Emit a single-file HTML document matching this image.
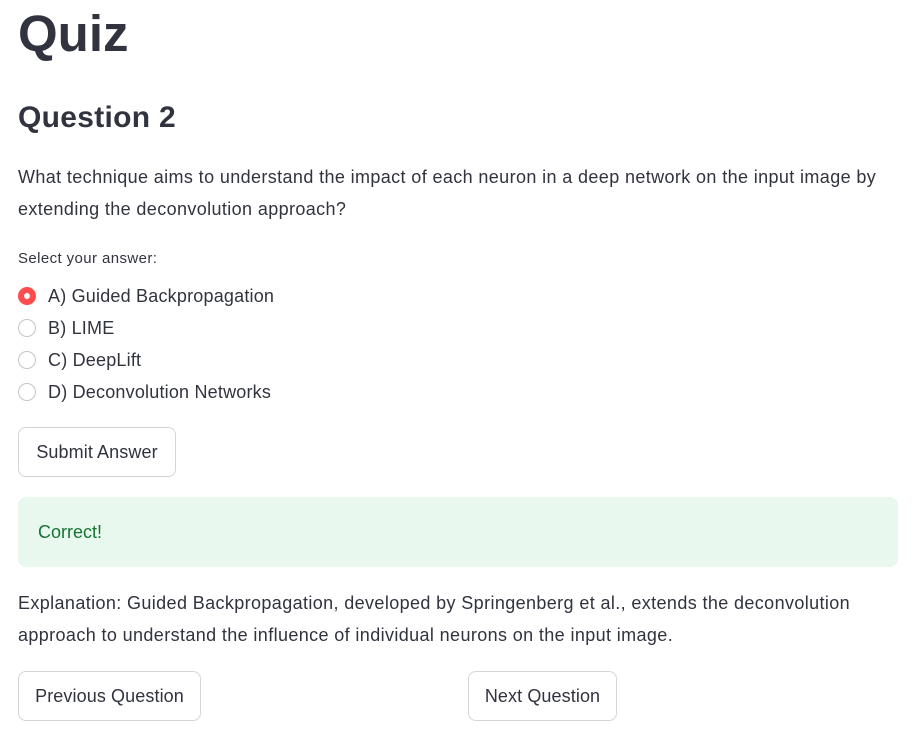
<!DOCTYPE html>
<html><head><meta charset="utf-8">
<style>
body{margin:0;background:#fff;width:918px;height:753px;overflow:hidden;font-family:"Liberation Sans",sans-serif;color:#31333f;position:relative}
.a{position:absolute;white-space:nowrap}
h1{position:absolute;left:18px;top:4px;margin:0;font-size:51px;font-weight:700;letter-spacing:0}
h2{position:absolute;left:18px;top:101px;margin:0;font-size:30px;font-weight:700;letter-spacing:0.3px}
.p{font-size:18px;line-height:32px;left:18px;letter-spacing:0.38px}
.r{left:18px;font-size:18px;display:flex;align-items:center;height:22px;letter-spacing:0.2px}
.r i{display:inline-block;width:18px;height:18px;border:1px solid #c5c6cb;border-radius:50%;margin-right:12px;box-sizing:border-box}
.r i.on{background:#ff4b4b;border:none;position:relative}
.r i.on:after{content:"";position:absolute;left:6px;top:6px;width:6px;height:6px;border-radius:50%;background:#fff}
.b{position:absolute;border:1px solid #d4d5d9;border-radius:8px;box-sizing:border-box;height:50px;display:flex;align-items:center;justify-content:center;font-size:18px;background:#fff;letter-spacing:0.1px}
</style></head><body>
<h1>Quiz</h1>
<h2>Question 2</h2>
<div class="a p" style="top:161px">What technique aims to understand the impact of each neuron in a deep network on the input image by</div>
<div class="a p" style="top:193px">extending the deconvolution approach?</div>
<div class="a" style="left:18px;top:250px;font-size:15px;letter-spacing:0.4px">Select your answer:</div>
<div class="a r" style="top:285px"><i class="on"></i>A) Guided Backpropagation</div>
<div class="a r" style="top:317px"><i></i>B) LIME</div>
<div class="a r" style="top:349px"><i></i>C) DeepLift</div>
<div class="a r" style="top:381px"><i></i>D) Deconvolution Networks</div>
<div class="b" style="left:18px;top:427px;width:158px">Submit Answer</div>
<div class="a" style="left:18px;top:497px;width:880px;height:70px;background:#e8f8ee;border-radius:8px"></div>
<div class="a" style="left:38px;top:522px;font-size:18px;color:#177233">Correct!</div>
<div class="a p" style="top:587px">Explanation: Guided Backpropagation, developed by Springenberg et al., extends the deconvolution</div>
<div class="a p" style="top:619px">approach to understand the influence of individual neurons on the input image.</div>
<div class="b" style="left:18px;top:671px;width:183px">Previous Question</div>
<div class="b" style="left:468px;top:671px;width:149px">Next Question</div>
</body></html>
